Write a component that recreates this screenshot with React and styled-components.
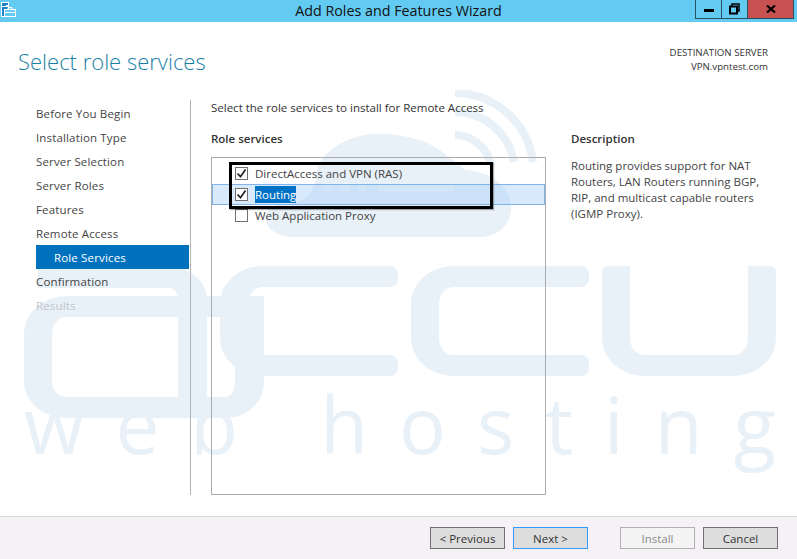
import React from 'react'
import styled, { createGlobalStyle } from 'styled-components'

const GlobalStyle = createGlobalStyle`
    html, body {
        margin: 0;
        padding: 0;
        background: #fff;
    }
    * {
        box-sizing: border-box;
    }
`

const navItems = [
    { label: 'Before You Begin' },
    { label: 'Installation Type' },
    { label: 'Server Selection' },
    { label: 'Server Roles' },
    { label: 'Features' },
    { label: 'Remote Access' },
    { label: 'Role Services', active: true },
    { label: 'Confirmation' },
    { label: 'Results', disabled: true },
]

const roleRows = [
    { label: 'DirectAccess and VPN (RAS)', checked: true },
    { label: 'Routing', checked: true, selected: true },
    { label: 'Web Application Proxy' },
]

const AppIcon = () => (
    <svg width="17" height="18" viewBox="0 0 17 18">
        <rect x="1.5" y="2.5" width="7" height="14" fill="#1f7fc4" stroke="#fff" />
        <rect x="2" y="6" width="6" height="1" fill="#fff" />
        <path d="M6 5.5h3" stroke="#fff" />
        <rect x="4.5" y="9.5" width="11" height="7" fill="#63cbf2" stroke="#fff" />
        <path d="M8 9V7.5h4V9" fill="none" stroke="#fff" />
        <path d="M5 12.5h10" stroke="#fff" />
    </svg>
)

const RestoreIcon = () => (
    <svg width="11" height="12" viewBox="0 0 11 12">
        <path d="M3 3V1h7v7H8" fill="none" stroke="#000" strokeWidth="1.5" />
        <rect x="1" y="3.5" width="7" height="7" fill="none" stroke="#000" strokeWidth="2" />
    </svg>
)

const CloseIcon = () => (
    <svg width="10" height="8" viewBox="0 0 10 8">
        <path d="M1 0.5l8 7M9 0.5l-8 7" stroke="#000" strokeWidth="2.2" />
    </svg>
)

const Check = () => (
    <svg width="11" height="11" viewBox="0 0 11 11">
        <path d="M1.5 5.5l3 3.2 5-7.2" fill="none" stroke="#222" strokeWidth="1.7" />
    </svg>
)

const Cloud = () => (
    <CloudArt viewBox="255 90 285 150" width="285" height="150">
        <path d="M295 237C276 237 266 228 266 218C266 208 277 202 292 204C305 200 315 196 317 170C322 150 350 134 378 134C405 134 425 140 440 150C450 158 458 164 465 170C492 172 511 187 511 208C511 226 497 237 480 237Z" fill="#e8f0f8" />
        <g fill="none" stroke="#e8f0f8" strokeWidth="8">
            <path d="M455 93A79 79 0 0 1 533 162" />
            <path d="M455 112A60 60 0 0 1 514 162" />
            <path d="M455 135A37 37 0 0 1 491 165" />
        </g>
        <g fill="#f3f7fb">
            <circle cx="328" cy="188" r="5" />
            <circle cx="345" cy="188" r="5" />
            <circle cx="362" cy="188" r="4" />
            <rect x="378" y="184" width="76" height="8" rx="4" />
        </g>
    </CloudArt>
)

const App = () => {
    return (
        <Page>
            <GlobalStyle />
            <Watermark aria-hidden="true">
                <Cloud />
                <Wordmark>
                    <LetterA />
                    <LetterC />
                    <LetterC />
                    <LetterU />
                </Wordmark>
                <Tagline>web hostin<TaglineEnd>g</TaglineEnd></Tagline>
            </Watermark>

            <TitleBar>
                <TitleIcon><AppIcon /></TitleIcon>
                <TitleText>Add Roles and Features Wizard</TitleText>
                <WindowButtons>
                    <WindowButton><MinimizeBar /></WindowButton>
                    <WindowButton><RestoreIcon /></WindowButton>
                    <WindowButton $close><CloseIcon /></WindowButton>
                </WindowButtons>
            </TitleBar>

            <Header>
                <Heading>Select role services</Heading>
                <Destination>
                    <div>DESTINATION SERVER</div>
                    <div>VPN.vpntest.com</div>
                </Destination>
            </Header>

            <Body>
                <Nav>
                    {navItems.map((item) => (
                        <NavItem key={item.label} $active={item.active} $disabled={item.disabled}>
                            {item.label}
                        </NavItem>
                    ))}
                </Nav>
                <Main>
                    <Intro>Select the role services to install for Remote Access</Intro>
                    <Columns>
                        <RolesColumn>
                            <SectionTitle>Role services</SectionTitle>
                            <RoleList>
                                {roleRows.map((row) => (
                                    <RoleRow key={row.label} $selected={row.selected}>
                                        <CheckBox>{row.checked && <Check />}</CheckBox>
                                        <RoleLabel $selected={row.selected}>{row.label}</RoleLabel>
                                    </RoleRow>
                                ))}
                                <Callout />
                            </RoleList>
                        </RolesColumn>
                        <DescriptionColumn>
                            <SectionTitle>Description</SectionTitle>
                            <DescriptionText>
                                Routing provides support for NAT Routers, LAN Routers running BGP, RIP, and multicast capable routers (IGMP Proxy).
                            </DescriptionText>
                        </DescriptionColumn>
                    </Columns>
                </Main>
            </Body>

            <Footer>
                <WizardButton>&lt; Previous</WizardButton>
                <WizardButton $focused>Next &gt;</WizardButton>
                <WizardButton $disabled $push>Install</WizardButton>
                <WizardButton>Cancel</WizardButton>
            </Footer>
        </Page>
    )
}

export default App


const Page = styled.div`
    position: relative;
    width: 797px;
    height: 559px;
    display: flex;
    flex-direction: column;
    overflow: hidden;
    background: #fff;
    color: #444;
    font-family: "Open Sans", "Noto Sans", sans-serif;
    font-size: 11.5px;

    > * {
        position: relative;
    }
`

const Watermark = styled.div`
    && {
        position: absolute;
    }
    inset: 0;
    pointer-events: none;
`

const CloudArt = styled.svg`
    position: absolute;
    left: 255px;
    top: 90px;
`

const Wordmark = styled.div`
    position: absolute;
    left: 24px;
    top: 266px;
    width: 752px;
    height: 110px;
    display: flex;
    justify-content: space-between;
`

const LetterA = styled.div`
    position: relative;
    width: 183px;
    height: 110px;

    &::before {
        content: "";
        position: absolute;
        top: 1px;
        right: 0;
        width: 140px;
        height: 109px;
        border-top: 21px solid #e8f0f8;
        border-right: 29px solid #e8f0f8;
        border-top-right-radius: 38px 32px;
    }

    &::after {
        content: "";
        position: absolute;
        left: 0;
        top: 30px;
        width: 183px;
        height: 80px;
        border: 21px solid #e8f0f8;
        border-left-width: 28px;
        border-right-width: 29px;
        border-radius: 42px 0 38px 42px / 38px 0 36px 36px;
    }
`

const LetterC = styled.div`
    position: relative;
    width: 170px;
    height: 110px;
    margin-right: 8px;
    border: 21px solid #e8f0f8;
    border-left-width: 28px;
    border-right: 0;
    border-radius: 42px 0 0 42px / 38px 0 0 38px;

    &::before,
    &::after {
        content: "";
        position: absolute;
        left: 100%;
        width: 8px;
        height: 21px;
        background: #e8f0f8;
        border-radius: 0 8px 8px 0;
    }

    &::before {
        top: -21px;
    }

    &::after {
        bottom: -21px;
    }
`

const LetterU = styled.div`
    width: 174px;
    height: 110px;
    border: 28px solid #e8f0f8;
    border-top: 0;
    border-bottom-width: 21px;
    border-radius: 6px 6px 42px 42px / 6px 6px 38px 38px;
`

const Tagline = styled.div`
    position: absolute;
    left: 24px;
    top: 371px;
    font-family: "Open Sans", sans-serif;
    font-weight: 400;
    font-size: 78px;
    line-height: 106px;
    letter-spacing: 31px;
    white-space: nowrap;
    color: #e8f0f8;
`

const TaglineEnd = styled.span`
    letter-spacing: 0;
`

const TitleBar = styled.header`
    height: 22px;
    flex: none;
    display: flex;
    justify-content: center;
    background: #63cbf2;
`

const TitleIcon = styled.div`
    position: absolute;
    left: 0;
    top: 0;
`

const TitleText = styled.div`
    font-size: 14.3px;
    line-height: 21px;
    color: #111;
`

const WindowButtons = styled.div`
    position: absolute;
    top: 0;
    left: 696px;
    display: flex;
`

const WindowButton = styled.div`
    width: ${(p) => (p.$close ? '47px' : '27px')};
    height: 19px;
    margin-left: -1px;
    display: flex;
    align-items: center;
    justify-content: center;
    border: 1px solid #2b4f63;
    border-top: 0;
    background: ${(p) => (p.$close ? '#c75050' : 'transparent')};
`

const MinimizeBar = styled.div`
    width: 10px;
    height: 3px;
    margin-top: 3px;
    background: #000;
`

const Header = styled.div`
    height: 78px;
    flex: none;
    display: flex;
    justify-content: space-between;
    padding: 0 29px 0 18px;
`

const Heading = styled.h1`
    margin: 21px 0 0;
    font-size: 22px;
    line-height: 36px;
    font-weight: 300;
    color: #1a7fa5;
`

const Destination = styled.div`
    margin-top: 24px;
    text-align: right;
    font-size: 9.7px;
    line-height: 14px;
    color: #333;
`

const Body = styled.div`
    flex: 1;
    display: flex;
    padding-bottom: 21px;
`

const Nav = styled.nav`
    width: 191px;
    flex: none;
    padding: 1px 1px 0 36px;
    border-right: 1px solid #b4b4b4;
`

const NavItem = styled.div`
    height: 24px;
    padding-top: 2px;
    line-height: 22px;
    letter-spacing: 0.15px;
    padding-left: ${(p) => (p.$active ? '18px' : '0')};
    background: ${(p) => (p.$active ? '#0072bd' : 'transparent')};
    color: ${(p) => (p.$active ? '#fff' : p.$disabled ? '#c0c6cc' : '#444')};
`

const Main = styled.main`
    flex: 1;
    display: flex;
    flex-direction: column;
    padding-left: 20px;
`

const Intro = styled.div`
    height: 16px;
    line-height: 16px;
    color: #333;
`

const Columns = styled.div`
    flex: 1;
    display: flex;
    gap: 25px;
    padding-top: 15px;
`

const RolesColumn = styled.section`
    width: 335px;
    display: flex;
    flex-direction: column;
`

const DescriptionColumn = styled.section`
    width: 195px;
`

const SectionTitle = styled.h2`
    margin: 0;
    height: 16px;
    font-size: 11.5px;
    line-height: 16px;
    font-weight: 600;
    color: #333;
`

const RoleList = styled.div`
    position: relative;
    flex: 1;
    margin-top: 10px;
    padding-top: 5px;
    border: 1px solid #ababab;
`

const RoleRow = styled.div`
    height: 21px;
    display: flex;
    align-items: center;
    gap: 7px;
    padding-left: 23px;
    background: ${(p) => (p.$selected ? 'rgba(170, 208, 248, 0.45)' : 'transparent')};
    box-shadow: ${(p) => (p.$selected ? 'inset 0 0 0 1px #80b4ea' : 'none')};
`

const CheckBox = styled.span`
    width: 13px;
    height: 13px;
    flex: none;
    display: flex;
    align-items: center;
    justify-content: center;
    background: #fff;
    border: 1px solid #707070;
`

const RoleLabel = styled.span`
    line-height: 17px;
    color: ${(p) => (p.$selected ? '#fff' : '#444')};
    background: ${(p) => (p.$selected ? '#0072c6' : 'transparent')};
`

const Callout = styled.div`
    position: absolute;
    left: 17px;
    top: 4px;
    width: 264px;
    height: 47px;
    border: 3px solid #000;
    box-shadow: 1px 1px 1px rgba(0, 0, 0, 0.3);
`

const DescriptionText = styled.p`
    margin: 11px 0 0;
    line-height: 16px;
    color: #444;
`

const Footer = styled.footer`
    height: 43px;
    flex: none;
    display: flex;
    align-items: center;
    justify-content: flex-end;
    gap: 8px;
    padding-right: 19px;
    background: #f5f1f6;
    border-top: 1px solid #d9d9d9;
`

const WizardButton = styled.div`
    width: 75px;
    height: 22px;
    margin-left: ${(p) => (p.$push ? '24px' : '0')};
    text-align: center;
    line-height: 21px;
    border: 1px solid ${(p) => (p.$focused ? '#3399ff' : p.$disabled ? '#b0b0b0' : '#707070')};
    background: ${(p) => (p.$disabled ? '#f4f4f4' : '#dddddd')};
    color: ${(p) => (p.$disabled ? '#8a8a8a' : '#333')};
`
